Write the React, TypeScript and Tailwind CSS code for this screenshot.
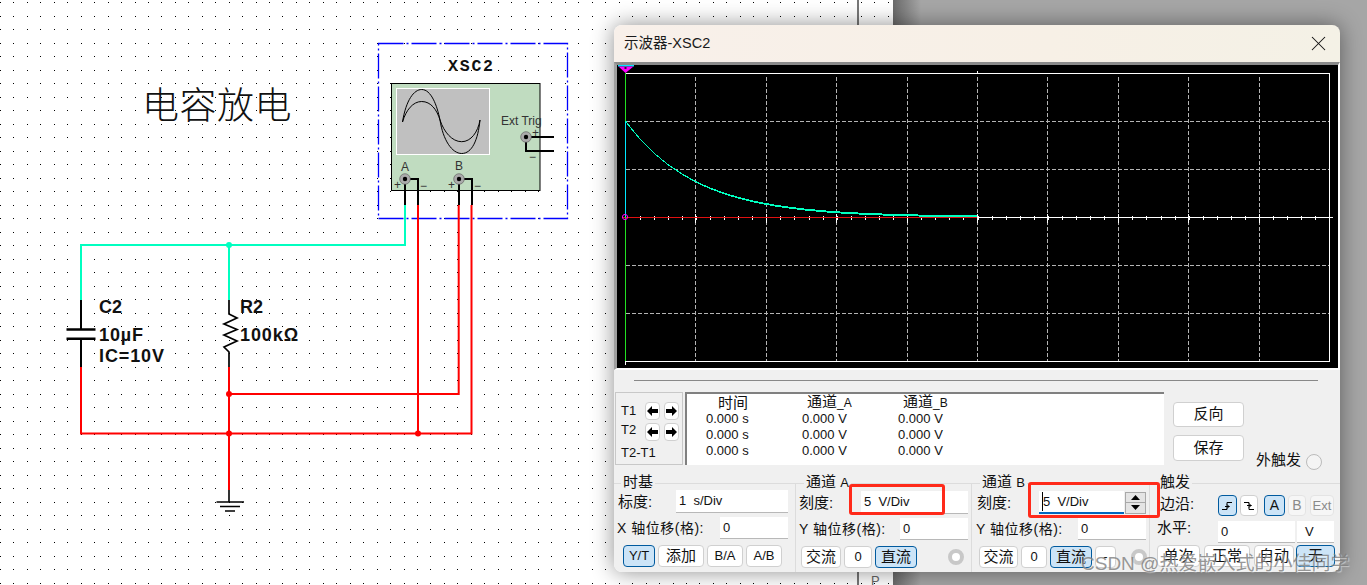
import type { ReactNode } from 'react'
import { X } from 'lucide-react'
import { twMerge } from 'tailwind-merge'

const TEAL = '#00ffc0'
const RED = '#ff0000'

function Schematic() {
  let dots = ''
  for (let i = 0; i < 67; i++) {
    for (let j = 0; j < 44; j++) {
      dots += `M${Math.round(13.45 * i)} ${Math.round(2 + 13.5 * j)}h1v1h-1z`
    }
  }
  return (
    <svg className="absolute left-0 top-0" width={893} height={585} viewBox="0 0 893 585">
      <path d={dots} fill="#000" shapeRendering="crispEdges" />

      {/* blue part outline */}
      <rect x={378.5} y={43.5} width={189} height={175} fill="none" stroke="#0000ff" strokeWidth={1.3} strokeDasharray="25 3 2 3" />

      {/* scope symbol */}
      <rect x={391.5} y={83.5} width={148.5} height={107} fill="#c0dcc0" stroke="#000" />
      <rect x={396.5} y={88.5} width={93} height={66} fill="#c0c0c0" stroke="#fff" />
      <path d="M402.5 122C406 100 414 89.5 421.7 89.5C431 89.5 437 105 440 120C443 140 452 153.5 461.7 153.5C472 153.5 478 140 480 120" fill="none" stroke="#000" />
      <path d="M402.5 122C406 110 413 101.5 421.7 101.5C431 101.5 437 110 440 120C444 132 452 141.7 461.7 141.7C471 141.7 478 132 480 120" fill="none" stroke="#000" />

      {/* teal net */}
      <path d="M405 205V245H81V300M229 245V300" fill="none" stroke={TEAL} strokeWidth={2} />
      <circle cx={229} cy={245} r={3} fill={TEAL} />

      {/* red nets */}
      <path d="M81 367V433.5H471.5V205M229 367V490M229 394H458.7V205M418 205V433.5" fill="none" stroke={RED} strokeWidth={2} />
      <circle cx={229} cy={394} r={3} fill={RED} />
      <circle cx={229} cy={433.5} r={3} fill={RED} />
      <circle cx={418} cy={433.5} r={3} fill={RED} />

      {/* scope pins */}
      <g fill="none" stroke="#000" strokeWidth={2}>
        <path d="M405 179V205M405 179H418V205" />
        <path d="M459 179V205M459 179H472V205" />
        <path d="M526 137H554M526 137V151H554" />
      </g>
      {[[405, 179], [459, 179], [526, 137]].map(([x, y]) => (
        <g key={x}>
          <circle cx={x} cy={y} r={5.3} fill="#aaa" stroke="#555" strokeWidth={0.6} />
          <circle cx={x} cy={y} r={2.2} fill="#000" />
        </g>
      ))}

      {/* capacitor */}
      <path d="M81 300V329M81 339V367" fill="none" stroke="#000" strokeWidth={2} />
      <path d="M66.5 329.5H95.5M66.5 338.7H95.5" fill="none" stroke="#000" strokeWidth={2.6} />

      {/* resistor */}
      <path d="M229 300V314L237 318L224 324L237 329.5L224 335L237 341L224 347L229 352V367" fill="none" stroke="#000" strokeWidth={1.7} />

      {/* ground */}
      <path d="M229 490V502M216.5 502H244M220 506.5H240M225 511H235" fill="none" stroke="#000" strokeWidth={1.6} />

      <g fontFamily="'Liberation Sans',sans-serif" fill="#333" fontSize={12}>
        <text x={401} y={171}>A</text>
        <text x={455} y={170}>B</text>
        <text x={501} y={125}>Ext Trig</text>
        <text x={394} y={189}>+</text>
        <text x={420} y={190}>−</text>
        <text x={448} y={189}>+</text>
        <text x={474} y={190}>−</text>
        <text x={532} y={137}>+</text>
        <text x={529} y={161}>−</text>
      </g>
      <text x={448} y={71} fontFamily="'Liberation Mono',monospace" fontWeight={700} fontSize={16.5} letterSpacing={1.8} fill="#111">XSC2</text>
      <g fontFamily="'Liberation Sans',sans-serif" fontWeight={700} fontSize={18} fill="#111">
        <text x={99} y={313}>C2</text>
        <text x={99} y={341} letterSpacing={0.9}>10µF</text>
        <text x={99} y={362} letterSpacing={0.9}>IC=10V</text>
        <text x={240} y={313}>R2</text>
        <text x={240} y={341} letterSpacing={0.9}>100kΩ</text>
      </g>
    </svg>
  )
}

function ScopePlot() {
  const vx = [695.5, 766.5, 836.5, 907.5, 977.5, 1047.5, 1118.5, 1188.5, 1259.5]
  const hy = [121.5, 169.5, 265.5, 313.5]
  const ticks: number[] = []
  for (let i = 1; i < 50; i++) ticks.push(Math.round(625.5 + i * 14.08) + 0.5)
  let curve = 'M625.5 121'
  for (let x = 626; x <= 977; x++) {
    curve += `L${x} ${Math.round(217 - 96 * Math.exp(-(x - 625.5) / 70.4))}`
  }
  return (
    <svg width={721} height={303} viewBox="617 65 721 303" className="block">
      <g shapeRendering="crispEdges">
        {vx.map(x => (
          <path key={x} d={`M${x} 77V361`} stroke="#b4b4b4" strokeDasharray="4 2" />
        ))}
        {hy.map(y => (
          <path key={y} d={`M626 ${y}H1329`} stroke="#b4b4b4" strokeDasharray="4 2" />
        ))}
        <path d="M625 73.5H1329.5V361.5H625M625.5 361V365M977.5 71V74" fill="none" stroke="#fff" />
        {ticks.map(x => (
          <path key={x} d={`M${x} 215.5V220`} stroke="#fff" />
        ))}
        {vx.map(x => (
          <path key={x} d={`M${x} 214V223`} stroke="#fff" />
        ))}
        <path d="M977 217.5H1333" stroke="#fff" />
        <path d="M622 217.5H977" stroke="#e01010" />
        <path d="M625.5 73V361" stroke="#22e022" />
        <path d="M625.5 121V217" stroke="#00e8ff" />
        <path d={curve} fill="none" stroke={TEAL} strokeWidth={1.4} />
      </g>
      <circle cx={625} cy={217} r={2.6} fill="none" stroke="#ff00ff" />
      <path d="M618 65.7H634" stroke="#00e8ff" strokeWidth={1.4} />
      <path d="M618.5 66.5H633.5L625.5 73Z" fill="#ff00ff" />
      <rect x={624.5} y={67} width={2} height={2} fill="#222" />
    </svg>
  )
}

function Btn({ children, active, muted, className }: { children?: ReactNode; active?: boolean; muted?: boolean; className?: string }) {
  return (
    <div
      className={twMerge(
        'flex items-center justify-center rounded-[4px] border',
        active ? 'border-[#005a9e] bg-[#cce4f7] text-[#111]' : muted ? 'border-[#e4e4e4] bg-[#f6f6f6] text-[#8a8a8a]' : 'border-[#d0d0d0] bg-white text-[#111]',
        className
      )}
    >
      {children}
    </div>
  )
}

function Field({ children, className }: { children?: ReactNode; className?: string }) {
  return <div className={twMerge('flex items-center whitespace-pre border-b border-b-[#b8b8b8] bg-white pl-[3px] text-[13px] text-[#111]', className)}>{children}</div>
}

function Group({ title, width, inset, last, children }: { title: ReactNode; width: string; inset: string; last?: boolean; children: ReactNode }) {
  return (
    <div className={twMerge('h-[89px] shrink-0 border-t border-t-[#dcdcdc]', !last && 'border-r border-r-[#dcdcdc]', width)}>
      <div className={twMerge('-mt-[11px] w-fit bg-[#f0f0f0] px-[2px] text-[15px] leading-[17px] text-[#111]', inset)}>{title}</div>
      {children}
    </div>
  )
}

function Radio({ className }: { className?: string }) {
  return <div className={twMerge('h-[16px] w-[16px] shrink-0 rounded-full border-[4px] border-[#c8c8c8] bg-white', className)} />
}

function ArrowBtn({ dir }: { dir: 'l' | 'r' }) {
  return (
    <Btn className="h-[18px] w-[15px]">
      <svg width={11} height={10} viewBox="0 0 11 10">
        <path d={dir === 'l' ? 'M0 5L5 0V3H11V7H5V10Z' : 'M11 5L6 0V3H0V7H6V10Z'} fill="#000" />
      </svg>
    </Btn>
  )
}

const rows = [0, 1, 2]

export default function App() {
  return (
    <div className="relative flex h-[585px] w-[1367px] overflow-hidden bg-[#a6a6a6] [font-family:'Liberation_Sans','Noto_Sans_CJK_SC',sans-serif]">
      {/* schematic sheet */}
      <div className="relative h-full w-[893px] shrink-0 bg-white">
        <Schematic />
        <div className="absolute left-[857px] top-0 h-full w-[2px] bg-[#777]" />
        <div className="absolute left-[871px] top-[573px] text-[13px] leading-[16px] text-[#666]">P</div>
        <div className="absolute left-[142px] top-[84px] text-[37px] font-light leading-[46px] tracking-[0.5px] text-[#111]">电容放电</div>
      </div>
      <div className="h-full flex-1 bg-[linear-gradient(90deg,#6a6a6a_0,#a6a6a6_28px)]" />

      {/* oscilloscope window */}
      <div className="absolute left-[614px] top-[25px] flex h-[547px] w-[726px] flex-col overflow-hidden rounded-[8px] shadow-[0_0_22px_rgba(0,0,0,0.45)]">
        <div className="flex h-[37px] shrink-0 items-center justify-between bg-[linear-gradient(90deg,#f8f0ea,#f7f0e6_60%,#f4f1e6)] pl-[10px] pr-[9px] text-[14.5px] text-[#1a1a1a]">
          <span>示波器-XSC2</span>
          <X size={25} strokeWidth={1} color="#111" />
        </div>
        <div className="h-[308px] shrink-0 border-b-2 border-l-[3px] border-r-2 border-t-[3px] border-b-white border-l-[#a0a0a0] border-r-white border-t-[#8a8a8a] bg-black">
          <ScopePlot />
        </div>

        <div className="min-h-0 flex-1 bg-[#f0f0f0]">
          <div className="ml-[20px] mr-[22px] mt-[10px] h-px bg-[#888]" />

          <div className="mt-[11px] flex h-[73px]">
            {/* cursor buttons */}
            <div className="ml-[1px] flex w-[68px] shrink-0 flex-col border border-[#c8c8c8] pl-[5px] pt-[9px] text-[13px] text-[#111]">
              <div className="flex h-[18px] items-center">
                <span className="w-[24px]">T1</span>
                <div className="flex gap-[4px]"><ArrowBtn dir="l" /><ArrowBtn dir="r" /></div>
              </div>
              <div className="mt-[3px] flex h-[18px] items-center">
                <span className="-mt-[4px] w-[24px]">T2</span>
                <div className="flex gap-[4px]"><ArrowBtn dir="l" /><ArrowBtn dir="r" /></div>
              </div>
              <div className="mt-[3px] leading-[17px]">T2-T1</div>
            </div>

            {/* readout */}
            <div className="ml-[2px] grid w-[479px] shrink-0 grid-cols-[19px_96px_96px_96px_1fr] grid-rows-[17px_16px_16px_16px] items-center border-l-2 border-t-2 border-l-[#808080] border-t-[#808080] bg-white text-[13px] text-[#111]">
              <span />
              <span className="pl-[12px] text-[15px] leading-[15px]">时间</span>
              <span className="pl-[5px] text-[15px] leading-[15px]">通道<span className="text-[12px]">_A</span></span>
              <span className="pl-[5px] text-[15px] leading-[15px]">通道<span className="text-[12px]">_B</span></span>
              <span />
              {rows.map(r => [
                <span key={`p${r}`} />,
                <span key={`t${r}`}>0.000 s</span>,
                <span key={`a${r}`}>0.000 V</span>,
                <span key={`b${r}`}>0.000 V</span>,
                <span key={`e${r}`} />
              ])}
            </div>

            {/* reverse / save */}
            <div className="ml-[9px] w-[71px] shrink-0 pt-[10px] text-[15px]">
              <Btn className="h-[25px]">反向</Btn>
              <Btn className="mt-[8px] h-[26px]">保存</Btn>
            </div>
            <div className="ml-[12px] mt-[59px] flex h-[20px] items-start whitespace-nowrap text-[15px] leading-[18px] text-[#111]">
              <span>外触发</span>
              <div className="ml-[5px] mt-[3px] h-[16px] w-[16px] rounded-full border border-[#bbb] bg-[#f4f4f4]" />
            </div>
          </div>

          {/* bottom control groups */}
          <div className="mt-[18px] flex">
            <Group title="时基" width="w-[182px]" inset="ml-[7px]">
              <div className="ml-[4px] flex h-[23px] items-center text-[15px] text-[#111]">
                <span className="w-[58px] pt-[2px]">标度:</span>
                <Field className="h-[23px] w-[112px]">1  s/Div</Field>
              </div>
              <div className="ml-[3px] mt-[4px] flex h-[22px] items-center text-[14px] text-[#111]">
                <span className="w-[103px] whitespace-nowrap tracking-[0.5px]">X 轴位移(格):</span>
                <Field className="h-[22px] w-[68px]">0</Field>
              </div>
              <div className="ml-[9px] mt-[6px] flex h-[22px] gap-[3px] text-[13px]">
                <Btn active className="w-[32px]">Y/T</Btn>
                <Btn className="w-[46px] text-[15px]">添加</Btn>
                <Btn className="w-[36px]">B/A</Btn>
                <Btn className="w-[36px]">A/B</Btn>
              </div>
            </Group>

            <Group title={<>通道 <span className="text-[13px]">A</span></>} width="w-[176px]" inset="ml-[8px]">
              <div className="ml-[3px] flex h-[23px] items-center text-[15px] text-[#111]">
                <span className="w-[62px] pt-[2px]">刻度:</span>
                <Field className="h-[23px] w-[107px]">5  V/Div</Field>
              </div>
              <div className="ml-[3px] mt-[4px] flex h-[22px] items-center text-[14px] text-[#111]">
                <span className="w-[101px] whitespace-nowrap tracking-[0.5px]">Y 轴位移(格):</span>
                <Field className="h-[22px] w-[68px]">0</Field>
              </div>
              <div className="ml-[5px] mt-[6px] flex h-[22px] items-center gap-[3px] text-[15px]">
                <Btn className="h-full w-[40px]">交流</Btn>
                <Btn className="h-full w-[28px] text-[13px]">0</Btn>
                <Btn active className="h-full w-[42px]">直流</Btn>
                <Radio className="ml-[28px]" />
              </div>
            </Group>

            <Group title={<>通道 <span className="text-[13px]">B</span></>} width="w-[178px]" inset="ml-[8px]">
              <div className="ml-[5px] flex h-[23px] items-center text-[15px] text-[#111]">
                <span className="w-[62px] pt-[2px]">刻度:</span>
                <Field className="h-[23px] w-[85px] border-b-2 border-b-[#0067c0]">
                  <span className="border-l border-black">5  V/Div</span>
                </Field>
                <div className="ml-px flex h-[22px] w-[21px] flex-col border border-[#a8a8a8] bg-[#e4e4e4]">
                  <div className="flex flex-1 items-center justify-center border-b border-[#a8a8a8]">
                    <svg width={9} height={5} viewBox="0 0 9 5"><path d="M4.5 0L9 5H0Z" fill="#000" /></svg>
                  </div>
                  <div className="flex flex-1 items-center justify-center">
                    <svg width={9} height={5} viewBox="0 0 9 5"><path d="M4.5 5L9 0H0Z" fill="#000" /></svg>
                  </div>
                </div>
              </div>
              <div className="ml-[4px] mt-[4px] flex h-[22px] items-center text-[14px] text-[#111]">
                <span className="w-[102px] whitespace-nowrap tracking-[0.5px]">Y 轴位移(格):</span>
                <Field className="h-[22px] w-[68px]">0</Field>
              </div>
              <div className="ml-[7px] mt-[6px] flex h-[22px] items-center gap-[3px] text-[15px]">
                <Btn className="h-full w-[39px]">交流</Btn>
                <Btn className="h-full w-[26px] text-[13px]">0</Btn>
                <Btn active className="h-full w-[42px]">直流</Btn>
                <Btn className="h-full w-[21px] text-[13px]">-</Btn>
                <Radio className="ml-[12px]" />
              </div>
            </Group>

            <Group title="触发" width="w-[190px]" inset="ml-[8px]" last>
              <div className="ml-[10px] flex h-[23px] items-start text-[15px] text-[#111]">
                <span className="w-[58px] pt-[3px]">边沿:</span>
                <div className="mt-[5px] flex h-[21px] text-[13px]">
                  <Btn active className="h-full w-[19px]">
                    <svg width={13} height={12} viewBox="0 0 13 12"><path d="M1 9.5H6V2.5H11M4 6.5H8.5M6 4.5L8 6.5L6 8.5" fill="none" stroke="#000" /></svg>
                  </Btn>
                  <Btn className="ml-[3px] h-full w-[18px]">
                    <svg width={13} height={12} viewBox="0 0 13 12"><path d="M1 2.5H6V9.5H11M4 5.5H8.5M6 3.5L8 5.5L6 7.5" fill="none" stroke="#000" /></svg>
                  </Btn>
                  <Btn active className="ml-[6px] h-full w-[21px] text-[14px]">A</Btn>
                  <Btn muted className="ml-[3px] h-full w-[18px] text-[14px]">B</Btn>
                  <Btn muted className="ml-[4px] h-full w-[24px]">Ext</Btn>
                </div>
              </div>
              <div className="ml-[7px] mt-[4px] flex h-[22px] items-start text-[15px] text-[#111]">
                <span className="w-[61px] leading-[22px]">水平:</span>
                <div className="mt-[4px] flex gap-[2px]">
                  <Field className="h-[22px] w-[77px]">0</Field>
                  <Field className="h-[22px] w-[37px] pl-[8px]">V</Field>
                </div>
              </div>
              <div className="ml-[7px] mt-[6px] flex h-[22px] text-[15px]">
                <Btn className="w-[43px]">单次</Btn>
                <Btn className="ml-[4px] w-[46px]">正常</Btn>
                <Btn className="ml-[4px] w-[40px]">自动</Btn>
                <Btn active className="ml-[2px] w-[39px]">无</Btn>
              </div>
            </Group>
          </div>
        </div>
      </div>

      {/* red callouts drawn on top of the screenshot */}
      <div className="absolute left-[849px] top-[484px] h-[31px] w-[96px] rounded-[3px] border-[3.5px] border-[#ff2a1a]" />
      <div className="absolute left-[1028px] top-[482px] h-[36px] w-[132px] rounded-[3px] border-[3.5px] border-[#ff2a1a]" />

      {/* watermark */}
      <div className="absolute left-[1081px] top-[552px] whitespace-nowrap text-[19px] leading-[24px] text-[rgba(125,125,125,0.8)] [text-shadow:1px_1px_1px_rgba(255,255,255,0.45)]">
        CSDN @热爱嵌入式的小佳同学
      </div>
    </div>
  )
}
